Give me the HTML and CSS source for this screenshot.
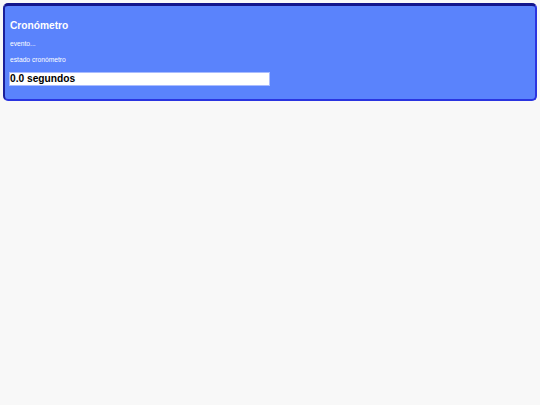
FILE: index.html
```html
<!DOCTYPE html>
<html lang="es">
<head>
<meta charset="utf-8">
<title>Cronómetro</title>
<link rel="stylesheet" href="styles.css">
</head>
<body>
<div class="panel">
  <h1 class="title">Cronómetro</h1>
  <p class="line first">evento...</p>
  <p class="line second">estado cronómetro</p>
  <div class="display">0.0 segundos</div>
</div>
</body>
</html>
```

FILE: styles.css
```css
html, body {
  margin: 0;
  padding: 0;
  background: #f8f8f8;
  font-family: "Liberation Sans", Arial, sans-serif;
}
.panel {
  margin: 3px 3px 0 3px;
  height: 98px;
  box-sizing: border-box;
  background: #5a83fc;
  border-radius: 5px;
  border-style: solid;
  border-width: 3px 2px 2px 2px;
  border-color: #12158c #2a34e0 #2a34e0 #1a1f9a;
  padding: 0 0 0 4px;
  display: flex;
  flex-direction: column;
  align-items: flex-start;
}
.title {
  margin: 13px 0 0 1px;
  font-size: 10.2px;
  line-height: 14px;
  font-weight: bold;
  color: #ffffff;
}
.line {
  margin: 0 0 0 1px;
  font-size: 6.7px;
  line-height: 8px;
  color: #ffffff;
}
.first { margin-top: 7px; }
.second { margin-top: 8px; }
.display {
  margin-top: 8px;
  box-sizing: border-box;
  width: 261px;
  height: 14px;
  background: #ffffff;
  border: 1px solid #a9bcff;
  padding-left: 0;
  font-size: 10.2px;
  line-height: 12px;
  font-weight: bold;
  color: #000000;
}
```
